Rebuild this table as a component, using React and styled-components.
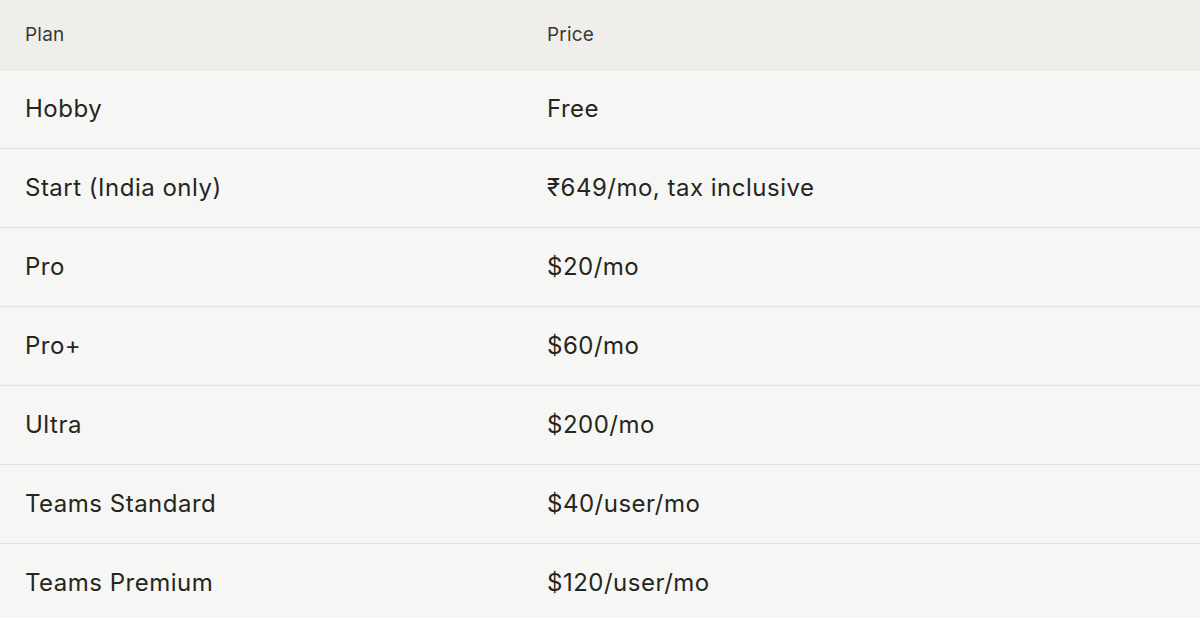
import React from "react";
import styled, { createGlobalStyle } from "styled-components";

const Global = createGlobalStyle`
  html, body { margin: 0; padding: 0; background: #f6f6f4; }
  body { font-family: Inter, "Noto Sans", sans-serif; color: #26251e; }
`;

const Table = styled.div`
  width: 1200px;
  display: grid;
  grid-template-columns: 522px 1fr;
`;

const HeadCell = styled.div`
  height: 70px;
  box-sizing: border-box;
  display: flex;
  align-items: center;
  padding-left: 25px;
  padding-bottom: 1px;
  background: #efeeea;
  border-bottom: 1px solid #e3e2de;
  font-size: 19px;
  color: #3a3934;
  letter-spacing: 0.2px;
`;

const Cell = styled.div`
  height: 79px;
  box-sizing: border-box;
  display: flex;
  align-items: center;
  padding-left: 25px;
  padding-bottom: 2px;
  background: #f6f6f4;
  border-bottom: ${(p) => (p.$last ? "none" : "1px solid #e3e2de")};
  font-size: 24px;
  color: #26251e;
  letter-spacing: 0.5px;
`;

const rows = [
  ["Hobby", "Free"],
  ["Start (India only)", "₹649/mo, tax inclusive"],
  ["Pro", "$20/mo"],
  ["Pro+", "$60/mo"],
  ["Ultra", "$200/mo"],
  ["Teams Standard", "$40/user/mo"],
  ["Teams Premium", "$120/user/mo"],
];

export default function App() {
  return (
    <>
      <Global />
      <Table>
        <HeadCell>Plan</HeadCell>
        <HeadCell>Price</HeadCell>
        {rows.map(([plan, price], i) => (
          <React.Fragment key={plan}>
            <Cell $last={i === rows.length - 1}>{plan}</Cell>
            <Cell $last={i === rows.length - 1}>{price}</Cell>
          </React.Fragment>
        ))}
      </Table>
    </>
  );
}
